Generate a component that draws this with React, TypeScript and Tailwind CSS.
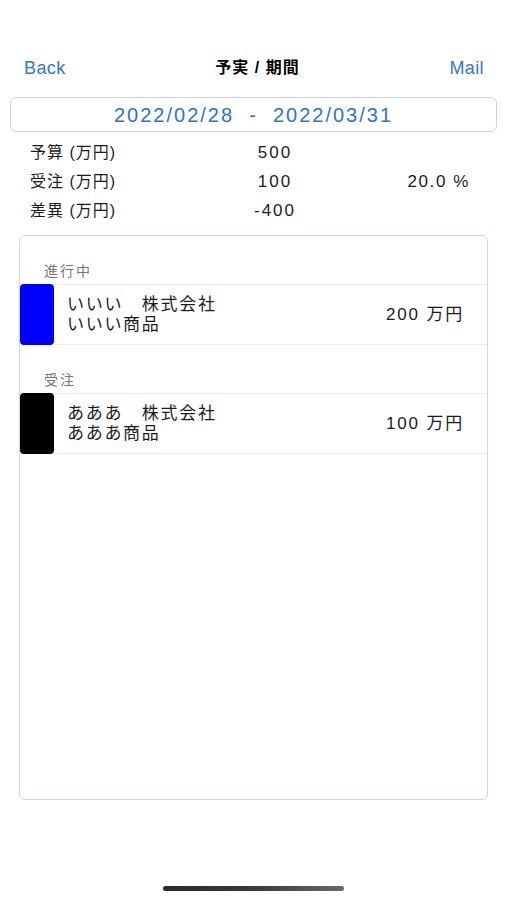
import React from "react";

const font = { fontFamily: '"Liberation Sans", "Noto Sans CJK JP", sans-serif' };

type Item = { color: string; company: string; product: string; amount: string };

const sections: { title: string; items: Item[] }[] = [
  { title: "進行中", items: [{ color: "bg-[#0000ff]", company: "いいい　株式会社", product: "いいい商品", amount: "200 万円" }] },
  { title: "受注", items: [{ color: "bg-black", company: "あああ　株式会社", product: "あああ商品", amount: "100 万円" }] },
];

const summary = [
  { label: "予算 (万円)", value: "500", pct: "" },
  { label: "受注 (万円)", value: "100", pct: "20.0 %" },
  { label: "差異 (万円)", value: "-400", pct: "" },
];

export default function App() {
  return (
    <div className="w-full h-[900px] bg-white flex flex-col text-[#1c1c1c]" style={font}>
      {/* nav bar */}
      <div className="flex items-center justify-between pl-[24px] pr-[23px] pt-[57px] h-[79px]">
        <span className="text-[18px] leading-[22px] tracking-[0.4px] text-[#3574d4]">Back</span>
        <span className="text-[16px] leading-[22px] font-bold tracking-[1px] text-black">予実 / 期間</span>
        <span className="text-[18px] leading-[22px] tracking-[0.4px] text-[#3574d4]">Mail</span>
      </div>

      {/* period */}
      <div className="mx-[10px] mt-[18px] h-[35px] rounded-[6px] border border-[#c6d8e4] flex items-center justify-center">
        <span className="text-[20px] tracking-[2px] text-[#3170d0] whitespace-pre">2022/02/28  -  2022/03/31</span>
      </div>

      {/* summary */}
      <div className="pl-[30px] pr-[37px] mt-[6px]">
        {summary.map((r) => (
          <div key={r.label} className="grid grid-cols-[190px_110px_1fr] items-center h-[29px]">
            <span className="text-[16px] tracking-[1px]">{r.label}</span>
            <span className="text-[17px] tracking-[2px] text-center">{r.value}</span>
            <span className="text-[17px] tracking-[1.6px] text-right">{r.pct}</span>
          </div>
        ))}
      </div>

      {/* list */}
      <div className="mx-[19px] mt-[10px] h-[565px] rounded-[6px] border border-[#bfdde8] overflow-hidden">
        {sections.map((s) => (
          <div key={s.title}>
            <div className="h-[48px] pt-[26px] pl-[24px] text-[14px] leading-[18px] tracking-[2px] text-[#777]">{s.title}</div>
            {s.items.map((it) => (
              <div key={it.company} className="flex h-[61px]">
                <div className={`w-[34px] shrink-0 rounded-[4px] ${it.color}`} />
                <div className="flex-1 flex items-center justify-between border-y border-[#ececec] pl-[13px] pr-[23px]">
                  <div className="text-[17px] leading-[20px] tracking-[1.7px]">
                    <div className="whitespace-pre">{it.company}</div>
                    <div>{it.product}</div>
                  </div>
                  <span className="text-[17px] tracking-[1.8px]">{it.amount}</span>
                </div>
              </div>
            ))}
          </div>
        ))}
      </div>

      {/* home indicator */}
      <div className="flex-1 flex items-end justify-center pb-[9px]">
        <div className="w-[181px] h-[5px] rounded-full bg-gradient-to-r from-[#2a2a2a] via-[#3a3a3a] to-[#6a6a6a]" />
      </div>
    </div>
  );
}
